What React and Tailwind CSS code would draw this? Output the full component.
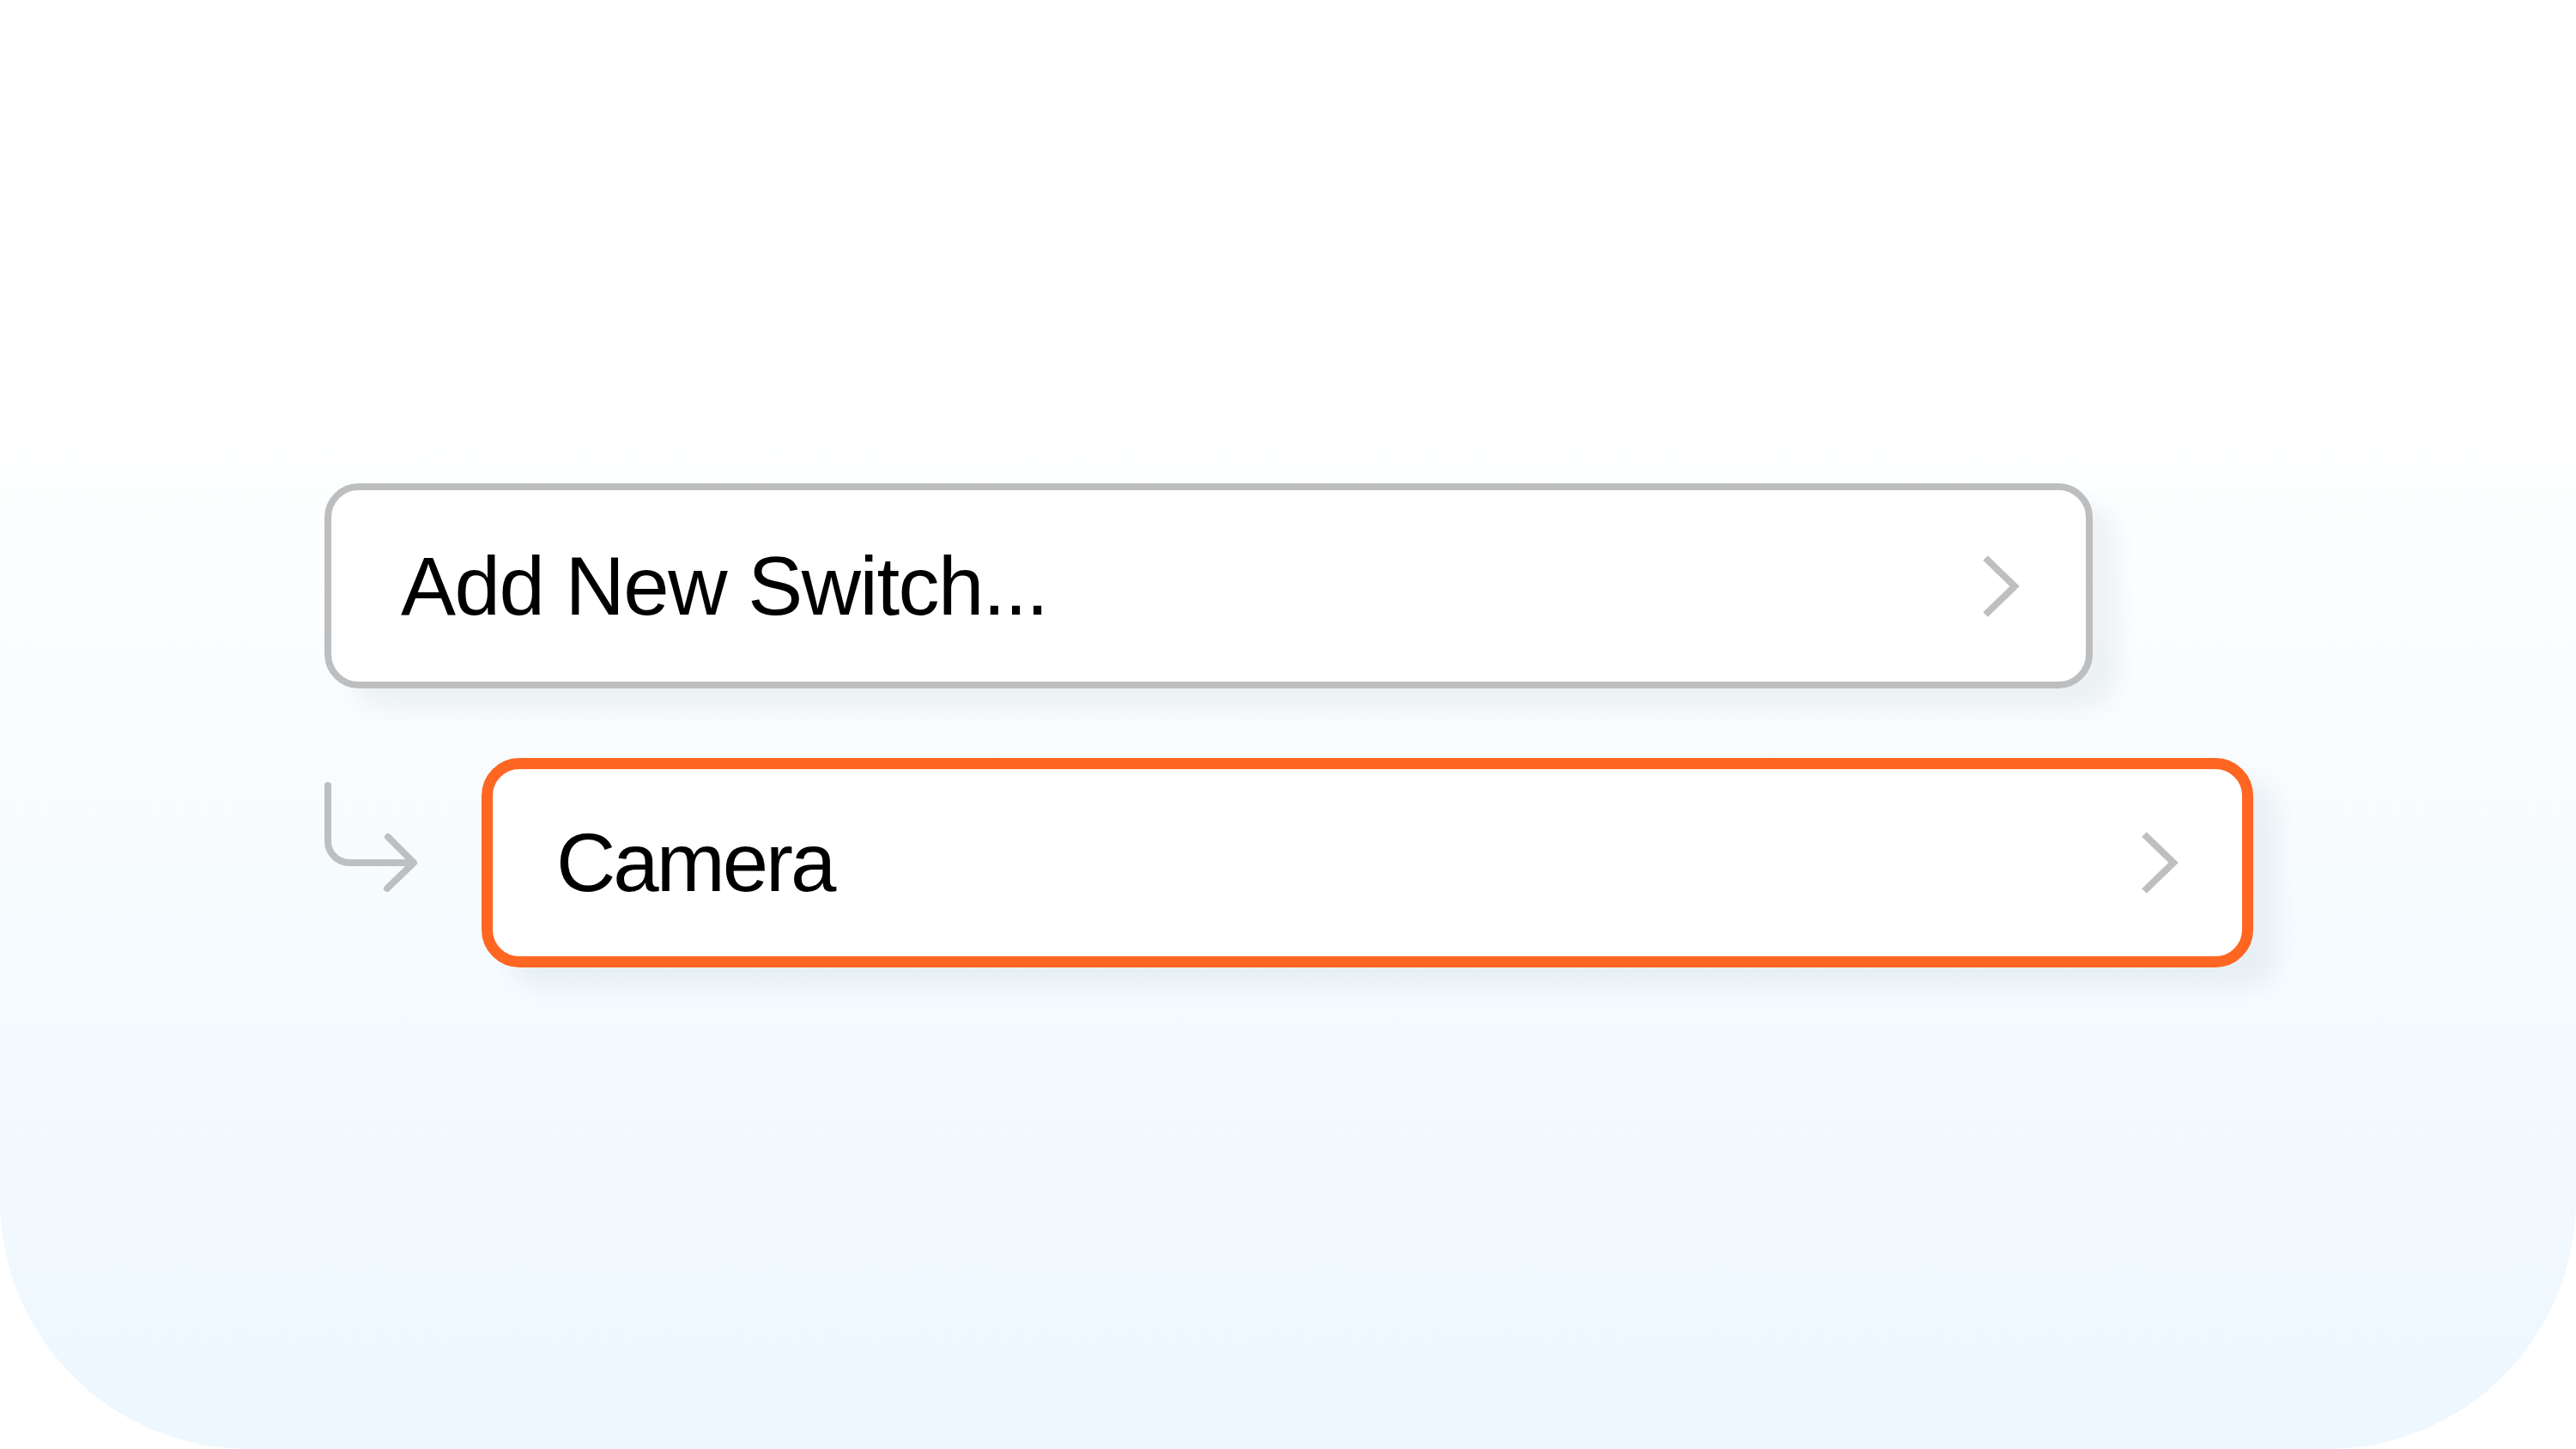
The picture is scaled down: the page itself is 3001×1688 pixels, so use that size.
import React from "react";

const Chevron = () => (
  <svg width="48" height="80" viewBox="0 0 48 80" fill="none" className="shrink-0">
    <polyline points="6,7 40,40 6,73" stroke="#bebfc1" strokeWidth="8" strokeLinecap="butt" strokeLinejoin="miter" />
  </svg>
);

const ChildArrow = () => (
  <svg width="124" height="140" viewBox="0 0 124 140" fill="none" className="shrink-0 ml-[370px] mt-[22px]">
    <path d="M12 10 V75 A25 25 0 0 0 37 100 H111" stroke="#bebfc1" strokeWidth="8" strokeLinecap="round" strokeLinejoin="round" />
    <path d="M82 70 L112 100 L81 130" stroke="#bebfc1" strokeWidth="8" strokeLinecap="round" strokeLinejoin="round" />
  </svg>
);

const App = () => {
  return (
    <div className="w-full h-[1688px] bg-white overflow-hidden">
      <div className="w-full h-full rounded-b-[290px] bg-linear-to-b from-white from-25% to-[#edf7fe] pt-[563px] font-['Liberation_Sans',Arial,sans-serif]">
        {/* parent row */}
        <div className="ml-[378px] w-[2060px] h-[239px] flex items-center justify-between rounded-[40px] border-[8px] border-[#bdbec0] bg-white pl-[81px] pr-[75px] shadow-[30px_24px_24px_rgba(40,60,90,0.06)]">
          <span className="text-[96px] leading-none text-black tracking-[-1.5px]">Add New Switch...</span>
          <Chevron />
        </div>

        {/* child row */}
        <div className="flex items-start mt-[81px]">
          <ChildArrow />
          <div className="ml-[67px] w-[2064px] h-[244px] flex items-center justify-between rounded-[44px] border-[13px] border-[#fe6622] bg-white pl-[74px] pr-[72px] shadow-[30px_24px_24px_rgba(40,60,90,0.06)]">
            <span className="text-[96px] leading-none text-black tracking-[-3px]">Camera</span>
            <Chevron />
          </div>
        </div>
      </div>
    </div>
  );
};

export default App;
